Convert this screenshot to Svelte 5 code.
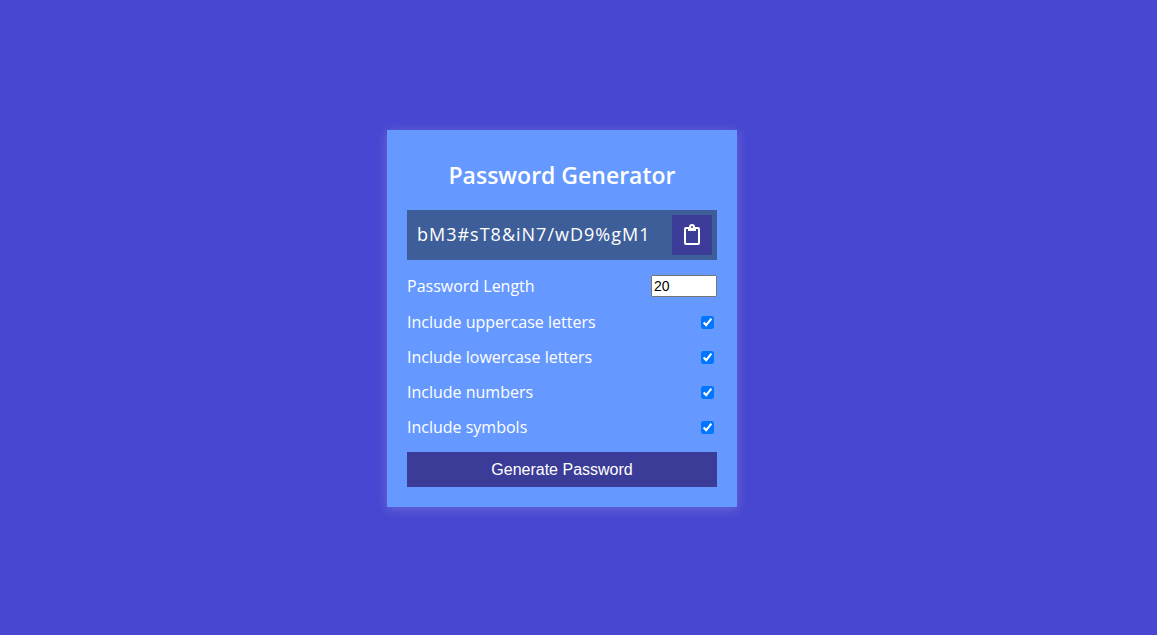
<script>
  let password = $state('bM3#sT8&iN7/wD9%gM1');
  let length = $state(20);
  let options = $state([
    { id: 'uppercase', label: 'Include uppercase letters', set: 'ABCDEFGHIJKLMNOPQRSTUVWXYZ', on: true },
    { id: 'lowercase', label: 'Include lowercase letters', set: 'abcdefghijklmnopqrstuvwxyz', on: true },
    { id: 'numbers', label: 'Include numbers', set: '0123456789', on: true },
    { id: 'symbols', label: 'Include symbols', set: '!@#$%^&*(){}[]=<>/,.', on: true }
  ]);

  function generate() {
    const sets = options.filter((o) => o.on).map((o) => o.set);
    let next = '';
    for (let i = 0; sets.length && i < length; i++) {
      const set = sets[i % sets.length];
      next += set[Math.floor(Math.random() * set.length)];
    }
    password = next;
  }

  function copy() {
    navigator.clipboard?.writeText(password);
  }
</script>

<main>
  <section class="card">
    <h2>Password Generator</h2>
    <div class="result">
      <output>{password}</output>
      <button class="copy" onclick={copy} aria-label="Copy password">
        <svg viewBox="0 0 16 22" width="16" height="22" aria-hidden="true">
          <path
            fill="#fff"
            fill-rule="evenodd"
            d="M2 3h3a3 3 0 0 1 6 0h3a2 2 0 0 1 2 2v14a2 2 0 0 1-2 2H2a2 2 0 0 1-2-2V5a2 2 0 0 1 2-2zM2.3 5a.3.3 0 0 0-.3.3v13.4a.3.3 0 0 0 .3.3h11.4a.3.3 0 0 0 .3-.3V5.3a.3.3 0 0 0-.3-.3H12v1.400a.6.6 0 0 1-.6.6H4.600a.6.6 0 0 1-.6-.6V5zM8 2a1 1 0 1 0 0 2a1 1 0 0 0 0-2z"
          />
        </svg>
      </button>
    </div>
    <div class="settings">
      <div class="setting">
        <label for="length">Password Length</label>
        <input id="length" type="number" min="4" max="20" bind:value={length} />
      </div>
      {#each options as option (option.id)}
        <div class="setting">
          <label for={option.id}>{option.label}</label>
          <input id={option.id} type="checkbox" bind:checked={option.on} />
        </div>
      {/each}
    </div>
    <button class="generate" onclick={generate}>Generate Password</button>
  </section>
</main>

<style>
  :global(body) {
    margin: 0;
    background: #4847d1;
  }

  main {
    box-sizing: border-box;
    min-height: 100vh;
    display: flex;
    align-items: center;
    justify-content: center;
    padding: 2px 33px 0 0;
    color: #fff;
    font: 16px/20px "Open Sans", sans-serif;
  }

  .card {
    box-sizing: border-box;
    width: 350px;
    max-width: 100%;
    padding: 20px;
    background: #6699ff;
    box-shadow: 0 2px 10px rgba(255, 255, 255, 0.2);
  }

  h2 {
    margin: 10px 0 20px;
    font-size: 23px;
    line-height: 30px;
    font-weight: 600;
    text-align: center;
  }

  .result {
    box-sizing: border-box;
    display: flex;
    align-items: center;
    justify-content: space-between;
    height: 50px;
    padding: 5px 5px 5px 10px;
    background: #3d5e99;
    font-size: 18px;
    letter-spacing: 1px;
  }

  output {
    padding-bottom: 2px;
  }

  .copy {
    display: flex;
    align-items: center;
    justify-content: center;
    width: 40px;
    height: 40px;
    padding: 0;
    border: none;
    background: #3b3b98;
    cursor: pointer;
  }

  .settings {
    display: flex;
    flex-direction: column;
    gap: 15px;
    margin: 15px 0;
  }

  .setting {
    display: flex;
    align-items: center;
    justify-content: space-between;
  }

  input[type="number"] {
    box-sizing: border-box;
    width: 66px;
    height: 22px;
    padding: 1px;
    font: 14px "Liberation Sans", Arial, sans-serif;
  }

  input[type="checkbox"] {
    width: 13px;
    height: 13px;
    margin: 3px;
  }

  .generate {
    display: block;
    width: 100%;
    height: 35px;
    padding: 0;
    border: none;
    background: #3b3b98;
    color: #fff;
    font: 16px "Liberation Sans", Arial, sans-serif;
    cursor: pointer;
  }
</style>
